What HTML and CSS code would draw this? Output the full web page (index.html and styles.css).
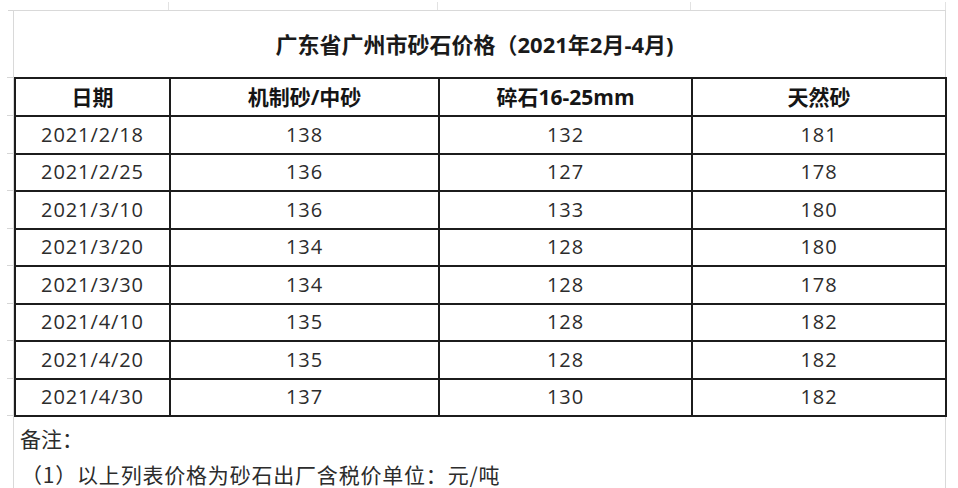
FILE: index.html
```html
<!DOCTYPE html>
<html lang="zh-CN">
<head>
<meta charset="utf-8">
<title>广东省广州市砂石价格</title>
<link rel="stylesheet" href="styles.css">
</head>
<body>
<div class="sheet">
  <div class="ticks-left">
    <div class="tk t0"></div>
    <div class="tk t1"></div>
    <div class="tk th"></div>
    <div class="tk tr"></div>
    <div class="tk tr"></div>
    <div class="tk tr"></div>
    <div class="tk tr"></div>
    <div class="tk tr"></div>
    <div class="tk tr"></div>
    <div class="tk tr"></div>
    <div class="tk tr"></div>
  </div>
  <div class="main">
    <div class="ticks-top">
      <div class="tc c1"></div>
      <div class="tc c2"></div>
      <div class="tc c3"></div>
      <div class="tc c4"></div>
    </div>
    <div class="frame">
      <div class="title">广东省广州市砂石价格（2021年2月-4月)</div>
      <table class="prices">
        <colgroup>
          <col class="c1"><col class="c2"><col class="c3"><col class="c4">
        </colgroup>
        <thead>
          <tr><th>日期</th><th>机制砂/中砂</th><th>碎石16-25mm</th><th>天然砂</th></tr>
        </thead>
        <tbody>
          <tr><td>2021/2/18</td><td>138</td><td>132</td><td>181</td></tr>
          <tr><td>2021/2/25</td><td>136</td><td>127</td><td>178</td></tr>
          <tr><td>2021/3/10</td><td>136</td><td>133</td><td>180</td></tr>
          <tr><td>2021/3/20</td><td>134</td><td>128</td><td>180</td></tr>
          <tr><td>2021/3/30</td><td>134</td><td>128</td><td>178</td></tr>
          <tr><td>2021/4/10</td><td>135</td><td>128</td><td>182</td></tr>
          <tr><td>2021/4/20</td><td>135</td><td>128</td><td>182</td></tr>
          <tr><td>2021/4/30</td><td>137</td><td>130</td><td>182</td></tr>
        </tbody>
      </table>
      <div class="notes">
        <div class="note-head">备注：</div>
        <div class="note-line">（1）以上列表价格为砂石出厂含税价单位：元/吨</div>
      </div>
    </div>
  </div>
</div>
</body>
</html>
```

FILE: styles.css
```css
html, body {
  margin: 0;
  padding: 0;
  background: #ffffff;
}

body {
  width: 958px;
  height: 488px;
  overflow: hidden;
  font-family: "Noto Sans CJK SC", "Open Sans", sans-serif;
  color: #2a2a2a;
}

.sheet {
  display: flex;
  align-items: flex-start;
}

.ticks-left {
  width: 13px;
  display: flex;
  flex-direction: column;
  align-items: flex-end;
}

.tk {
  width: 6px;
  border-bottom: 1px solid #d6d6d6;
  box-sizing: border-box;
}

.t0 { height: 11px; width: 5px; }
.t1 { height: 67px; }
.th { height: 38px; }
.tr { height: 37.5px; }

.main {
  width: 933px;
  display: flex;
  flex-direction: column;
}

.ticks-top {
  height: 10px;
  display: flex;
  padding-left: 1px;
}

.tc {
  box-sizing: border-box;
  border-right: 1px solid #e2e2e2;
  margin-top: 2px;
}

.tc.c1 { width: 155px; }
.tc.c2 { width: 269px; }
.tc.c3 { width: 253px; }
.tc.c4 { width: 255px; }

.frame {
  border-top: 1px solid #d9d9d9;
  border-left: 1px solid #d9d9d9;
  border-right: 1px solid #d9d9d9;
  height: 478px;
  box-sizing: border-box;
}

.title {
  height: 66px;
  display: flex;
  align-items: center;
  justify-content: center;
  font-family: "Open Sans", "Noto Sans CJK SC", sans-serif;
  font-size: 22px;
  font-weight: 700;
  color: #1a1a1a;
  padding-bottom: 2px;
  padding-right: 10px;
  box-sizing: border-box;
}

.prices {
  border-collapse: collapse;
  width: 931px;
  table-layout: fixed;
  border: 2px solid #1c1c1c;
}

col.c1 { width: 155px; }
col.c2 { width: 269px; }
col.c3 { width: 253px; }
col.c4 { width: 254px; }

.prices thead tr { height: 38px; }
.prices tbody tr { height: 37.5px; }

.prices th,
.prices td {
  border: 2px solid #1c1c1c;
  text-align: center;
  padding: 0;
  line-height: 1;
}

.prices th {
  font-family: "Open Sans", "Noto Sans CJK SC", sans-serif;
  font-size: 21px;
  font-weight: 700;
  color: #151515;
}

.prices td {
  font-size: 20px;
  letter-spacing: 0.9px;
  color: #2c2c2c;
  font-family: "Open Sans", "Noto Sans CJK SC", sans-serif;
}

.notes {
  padding-top: 3px;
  padding-left: 6px;
  font-size: 21px;
  color: #2c2c2c;
}

.note-head {
  line-height: 36px;
}

.note-line {
  line-height: 36px;
  padding-left: 1px;
  letter-spacing: 0.8px;
}
```
